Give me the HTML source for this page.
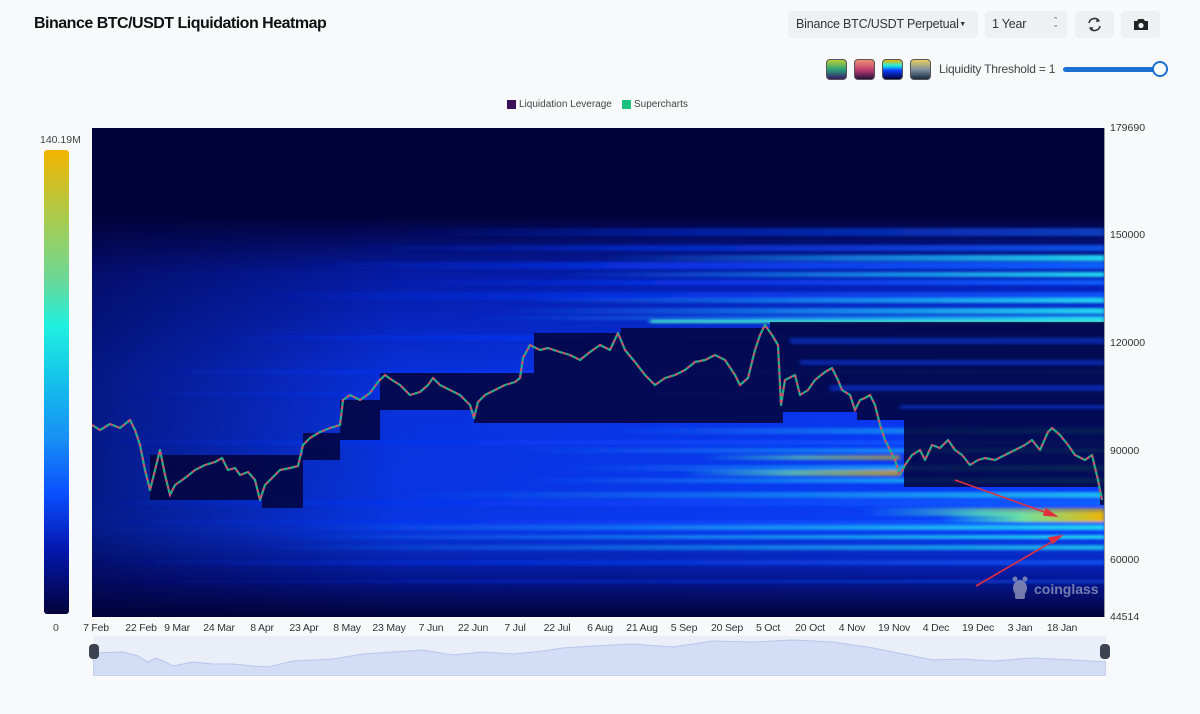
<!DOCTYPE html>
<html><head><meta charset="utf-8">
<style>
*{margin:0;padding:0;box-sizing:border-box}
body{width:1200px;height:714px;background:#f8f9fa;font-family:"Liberation Sans",sans-serif;position:relative;overflow:hidden;color:#222}
.abs{position:absolute}
.title{left:34px;top:15px;font-size:16px;font-weight:bold;color:#111;letter-spacing:-0.5px}
.btn{background:#eef0f3;border-radius:4px;top:11px;height:27px;font-size:12.5px;color:#333;line-height:27px;letter-spacing:-0.2px}
.sw{top:59px;width:21px;height:21px;border-radius:4px;border:1px solid #555}
.xl{top:622px;font-size:10.5px;color:#333;transform:translateX(-50%);white-space:nowrap;letter-spacing:-0.2px}
.yl{left:1110px;font-size:10.5px;color:#333}
</style></head><body>
<div class="abs title">Binance BTC/USDT Liquidation Heatmap</div>
<div class="abs btn" style="left:788px;width:190px;padding-left:8px">Binance BTC/USDT Perpetual<span style="position:absolute;right:12px;top:0;font-size:7px">&#9660;</span></div>
<div class="abs btn" style="left:985px;width:82px;padding-left:7px">1 Year<span style="position:absolute;right:10px;top:-1px;font-size:9px;line-height:8px;padding-top:7px">&#710;<br>&#711;</span></div>
<div class="abs btn" style="left:1075px;width:39px">
<svg width="39" height="27" viewBox="0 0 39 27"><g fill="none" stroke="#333" stroke-width="1.6"><path d="M14 12a5.5 5.5 0 0 1 10-2"/><path d="M25 15a5.5 5.5 0 0 1-10 2"/></g><path d="M22 7l3 3.5-4 .5z" fill="#333"/><path d="M17 20l-3-3.5 4-.5z" fill="#333"/></svg></div>
<div class="abs btn" style="left:1121px;width:39px">
<svg width="39" height="27" viewBox="0 0 39 27"><path d="M13 10h3l1.5-2h5L24 10h3v9H13z" fill="#222"/><circle cx="20" cy="14.5" r="2.6" fill="#eef0f3"/></svg></div>
<div class="abs sw" style="left:826px;background:linear-gradient(#b8d23a,#2aa07a 50%,#3a1a6a)"></div>
<div class="abs sw" style="left:854px;background:linear-gradient(#f09070,#c04070 50%,#2a1040)"></div>
<div class="abs sw" style="left:882px;background:linear-gradient(#f0b400,#1ff0e0 30%,#0a3cff 55%,#02023a)"></div>
<div class="abs sw" style="left:910px;background:linear-gradient(#e8d060,#8090a0 50%,#1a2a40)"></div>
<div class="abs" style="left:939px;top:62px;font-size:12px;color:#444;letter-spacing:-0.2px">Liquidity Threshold = 1</div>
<div class="abs" style="left:1063px;top:67px;width:96px;height:5px;background:#1a6fd1;border-radius:3px"></div>
<div class="abs" style="left:1152px;top:61px;width:16px;height:16px;border-radius:50%;background:#fff;border:2px solid #1a6fd1"></div>
<div class="abs" style="left:507px;top:100px;width:9px;height:9px;background:#3b0f5a"></div>
<div class="abs" style="left:519px;top:99px;font-size:10px;color:#444">Liquidation Leverage</div>
<div class="abs" style="left:622px;top:100px;width:9px;height:9px;background:#19c37d"></div>
<div class="abs" style="left:634px;top:99px;font-size:10px;color:#444">Supercharts</div>
<div class="abs" style="left:40px;top:134px;font-size:10.5px;color:#444">140.19M</div>
<div class="abs" style="left:44px;top:150px;width:25px;height:464px;border-radius:3px;background:linear-gradient(#f2b400,#a8cc50 15%,#6ad898 28%,#1ff0e0 38%,#14b8ec 52%,#1890f5 62%,#0a50ff 74%,#0418b0 86%,#02023a)"></div>
<div class="abs" style="left:53px;top:622px;font-size:10.5px;color:#444">0</div>

<svg class="abs" style="left:92px;top:128px" width="1013" height="489" viewBox="92 128 1013 489">
<defs>
<linearGradient id="fb" x1="0" x2="1"><stop offset="0" stop-color="#0a2cf0" stop-opacity="0"/><stop offset="0.4" stop-color="#0a38f8" stop-opacity="0.7"/><stop offset="1" stop-color="#1060ff"/></linearGradient>
<linearGradient id="fc" x1="0" x2="1"><stop offset="0" stop-color="#1a80ff" stop-opacity="0"/><stop offset="0.5" stop-color="#18a0f8" stop-opacity="0.7"/><stop offset="1" stop-color="#22d8f0"/></linearGradient>
<linearGradient id="fy" x1="0" x2="1"><stop offset="0" stop-color="#1ff0e0" stop-opacity="0"/><stop offset="0.5" stop-color="#70e0a0"/><stop offset="1" stop-color="#f0b400"/></linearGradient>
<linearGradient id="vb" x1="0" y1="0" x2="0" y2="1"><stop offset="0" stop-color="#02023a"/><stop offset="0.18" stop-color="#02023a"/><stop offset="0.3" stop-color="#0620b8"/><stop offset="0.5" stop-color="#0a38f5"/><stop offset="0.82" stop-color="#0a40ff"/><stop offset="0.92" stop-color="#05189a"/><stop offset="1" stop-color="#020338"/></linearGradient>
<linearGradient id="hl" x1="0" x2="1"><stop offset="0" stop-color="#02023a" stop-opacity="0.6"/><stop offset="0.3" stop-color="#02023a" stop-opacity="0.15"/><stop offset="1" stop-color="#02023a" stop-opacity="0"/></linearGradient>
<filter id="bl" x="-5%" y="-5%" width="110%" height="110%"><feGaussianBlur stdDeviation="2 1.2"/></filter>
</defs>
<rect x="92" y="128" width="1013" height="489" fill="#02023a"/>
<rect x="92" y="128" width="1013" height="489" fill="url(#vb)"/>
<rect x="92" y="128" width="1013" height="489" fill="url(#hl)"/>
<g filter="url(#bl)">
<g fill="url(#fb)">
<rect x="400" y="228" width="705" height="8" opacity=".6"/>
<rect x="350" y="245" width="755" height="6" opacity=".8"/>
<rect x="300" y="262" width="805" height="7"/>
<rect x="380" y="280" width="725" height="5"/>
<rect x="250" y="292" width="855" height="8" opacity=".8"/>
<rect x="200" y="335" width="905" height="6"/>
<rect x="150" y="370" width="955" height="5"/>
<rect x="120" y="392" width="985" height="4"/>
<rect x="92" y="440" width="1013" height="5"/>
<rect x="92" y="500" width="1013" height="6"/>
<rect x="100" y="520" width="1005" height="4"/>
<rect x="92" y="560" width="1013" height="5" opacity=".7"/>
<rect x="92" y="580" width="1013" height="3" opacity=".5"/>
</g>
<g fill="url(#fc)">
<rect x="600" y="255" width="505" height="6"/>
<rect x="560" y="272" width="545" height="5"/>
<rect x="520" y="298" width="585" height="5"/>
<rect x="500" y="308" width="605" height="6"/>
<rect x="470" y="316" width="635" height="4"/>
<rect x="600" y="428" width="505" height="6" opacity=".8"/>
<rect x="500" y="448" width="605" height="5" opacity=".8"/>
<rect x="560" y="465" width="545" height="6"/>
<rect x="520" y="478" width="585" height="5"/>
<rect x="400" y="492" width="705" height="6" opacity=".8"/>
<rect x="300" y="525" width="805" height="5"/>
<rect x="280" y="535" width="825" height="4"/>
<rect x="260" y="545" width="845" height="5" opacity=".8"/>
</g>
<rect x="650" y="320" width="455" height="3" fill="#40e8d0"/>
<g fill="url(#fy)">
<rect x="700" y="455" width="200" height="5" opacity=".6"/>
<rect x="680" y="470" width="220" height="6" opacity=".7"/>
<rect x="860" y="508" width="245" height="8" opacity=".7"/>
<rect x="940" y="512" width="165" height="10"/>
</g>
</g>
<path fill="#02033a" fill-opacity=".85" d="M380 373H534V333H621V328H770V322H1105V505H1100V487H904V420H857V412H783V423H474V410H380ZM340 400H380V440H340ZM303 433H340V460H303ZM150 455H303V508H262V500H150Z"/>
<g fill="#0a3ce8" opacity=".55" filter="url(#bl)">
<rect x="790" y="338" width="315" height="6"/><rect x="800" y="360" width="305" height="5"/><rect x="830" y="385" width="275" height="6"/><rect x="900" y="405" width="205" height="4"/>
</g>
<polyline fill="none" stroke="#22b08a" stroke-width="2.2" stroke-linejoin="round" points="92,425 100,430 110,424 120,428 130,420 135,430 140,445 145,470 150,490 155,470 160,450 165,475 170,495 175,485 185,478 195,470 205,465 215,462 222,458 228,470 235,468 240,475 248,472 255,480 260,500 265,485 272,478 280,470 290,468 298,466 303,445 310,438 320,432 330,428 340,425 343,400 350,395 360,400 370,393 378,382 385,375 392,380 400,385 410,395 420,392 428,385 433,378 440,385 450,390 460,395 470,405 474,418 478,402 485,395 495,390 505,385 515,382 520,378 523,358 530,345 540,350 548,348 560,352 570,355 580,360 590,352 600,345 610,350 618,333 625,350 635,362 645,375 655,385 665,378 675,375 685,370 695,362 705,360 715,355 725,360 735,375 740,385 748,378 755,350 760,335 765,325 772,335 778,345 781,405 785,380 795,375 800,395 808,390 815,380 825,372 832,368 838,380 842,390 850,395 855,410 860,400 865,398 870,395 875,405 880,425 885,440 890,450 895,460 900,475 905,465 912,455 920,450 925,460 932,445 940,448 948,440 955,450 962,455 970,465 978,460 985,458 995,460 1005,455 1015,450 1025,445 1032,440 1040,450 1048,432 1052,428 1060,435 1068,445 1075,455 1085,460 1092,455 1098,480 1102,500"/>
<polyline fill="none" stroke="#e04868" stroke-width="2" stroke-dasharray="3 4" points="92,425 100,430 110,424 120,428 130,420 135,430 140,445 145,470 150,490 155,470 160,450 165,475 170,495 175,485 185,478 195,470 205,465 215,462 222,458 228,470 235,468 240,475 248,472 255,480 260,500 265,485 272,478 280,470 290,468 298,466 303,445 310,438 320,432 330,428 340,425 343,400 350,395 360,400 370,393 378,382 385,375 392,380 400,385 410,395 420,392 428,385 433,378 440,385 450,390 460,395 470,405 474,418 478,402 485,395 495,390 505,385 515,382 520,378 523,358 530,345 540,350 548,348 560,352 570,355 580,360 590,352 600,345 610,350 618,333 625,350 635,362 645,375 655,385 665,378 675,375 685,370 695,362 705,360 715,355 725,360 735,375 740,385 748,378 755,350 760,335 765,325 772,335 778,345 781,405 785,380 795,375 800,395 808,390 815,380 825,372 832,368 838,380 842,390 850,395 855,410 860,400 865,398 870,395 875,405 880,425 885,440 890,450 895,460 900,475 905,465 912,455 920,450 925,460 932,445 940,448 948,440 955,450 962,455 970,465 978,460 985,458 995,460 1005,455 1015,450 1025,445 1032,440 1040,450 1048,432 1052,428 1060,435 1068,445 1075,455 1085,460 1092,455 1098,480 1102,500"/>
<g stroke="#e03040" stroke-width="1.6" fill="#e03040">
<line x1="955" y1="480" x2="1050" y2="514"/><path d="M1056 516l-10-7-2 6z"/>
<line x1="976" y1="586" x2="1055" y2="540"/><path d="M1061 536l-12 2 4 5z"/>
</g>
<g fill="#8a90b8" opacity=".85">
<ellipse cx="1020" cy="588" rx="7" ry="8"/><rect x="1015" y="593" width="10" height="6" rx="2"/><circle cx="1015" cy="579" r="2.5"/><circle cx="1025" cy="579" r="2.5"/>
</g>
<text x="1034" y="594" font-family="Liberation Sans,sans-serif" font-size="14" font-weight="bold" fill="#8a90b8" opacity=".85">coinglass</text>
</svg>
<div class="abs" style="left:1104px;top:128px;width:1px;height:489px;background:#999"></div>
<div class="abs yl" style="top:122px">179690</div>
<div class="abs yl" style="top:229px">150000</div>
<div class="abs yl" style="top:337px">120000</div>
<div class="abs yl" style="top:445px">90000</div>
<div class="abs yl" style="top:554px">60000</div>
<div class="abs yl" style="top:611px">44514</div>
<div class="abs xl" style="left:96px">7 Feb</div>
<div class="abs xl" style="left:141px">22 Feb</div>
<div class="abs xl" style="left:177px">9 Mar</div>
<div class="abs xl" style="left:219px">24 Mar</div>
<div class="abs xl" style="left:262px">8 Apr</div>
<div class="abs xl" style="left:304px">23 Apr</div>
<div class="abs xl" style="left:347px">8 May</div>
<div class="abs xl" style="left:389px">23 May</div>
<div class="abs xl" style="left:431px">7 Jun</div>
<div class="abs xl" style="left:473px">22 Jun</div>
<div class="abs xl" style="left:515px">7 Jul</div>
<div class="abs xl" style="left:557px">22 Jul</div>
<div class="abs xl" style="left:600px">6 Aug</div>
<div class="abs xl" style="left:642px">21 Aug</div>
<div class="abs xl" style="left:684px">5 Sep</div>
<div class="abs xl" style="left:727px">20 Sep</div>
<div class="abs xl" style="left:768px">5 Oct</div>
<div class="abs xl" style="left:810px">20 Oct</div>
<div class="abs xl" style="left:852px">4 Nov</div>
<div class="abs xl" style="left:894px">19 Nov</div>
<div class="abs xl" style="left:936px">4 Dec</div>
<div class="abs xl" style="left:978px">19 Dec</div>
<div class="abs xl" style="left:1020px">3 Jan</div>
<div class="abs xl" style="left:1062px">18 Jan</div>
<svg class="abs" style="left:93px;top:636px" width="1013" height="40" viewBox="0 0 1013 40">
<rect width="1013" height="40" fill="#e9eef9"/>
<path d="M0 17L30 16 45 20 55 26 62 22 70 25 80 30 100 26 120 28 140 28 160 30 175 31 200 25 240 23 270 18 300 16 330 14 360 19 390 16 420 18 450 15 470 12 500 10 540 8 580 11 620 5 660 6 700 4 740 6 780 12 810 18 840 24 870 23 900 25 940 22 980 24 1013 26V40H0Z" fill="#d3ddf5" stroke="#b8c6ea" stroke-width="1"/>
</svg>
<div class="abs" style="left:89px;top:644px;width:10px;height:15px;border-radius:4px;background:#3c4250"></div>
<div class="abs" style="left:1100px;top:644px;width:10px;height:15px;border-radius:4px;background:#3c4250"></div>
</body></html>
